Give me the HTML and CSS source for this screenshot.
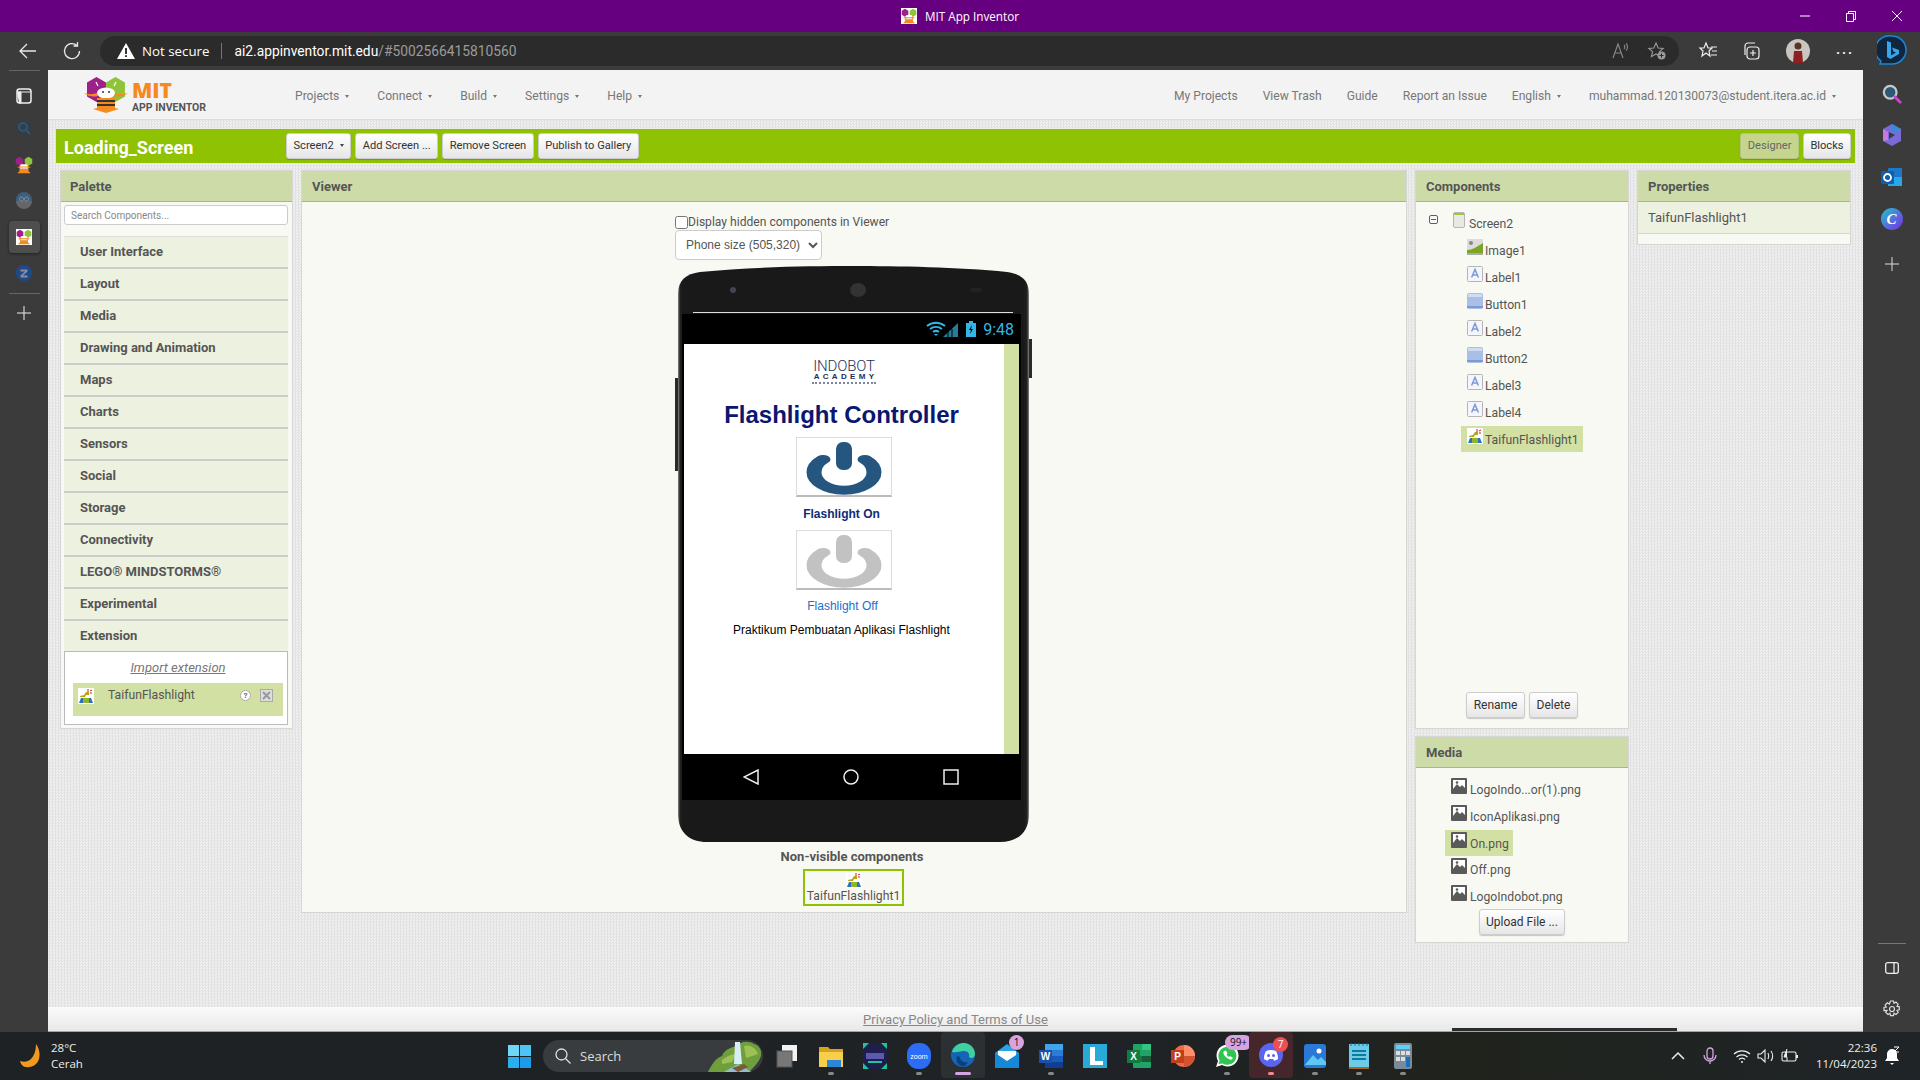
FILE: index.html
```html
<!DOCTYPE html>
<html lang="en">
<head>
<meta charset="utf-8">
<title>MIT App Inventor</title>
<link rel="stylesheet" href="styles.css">
</head>
<body>
<svg class="defs" width="0" height="0" aria-hidden="true">
  <defs>
    <symbol id="mini" viewBox="0 0 24 24">
      <path d="M6 1l5 3v6l-5 3-5-3V4z" fill="#9c2188"/><path d="M18 1l5 3v6l-5 3-5-3V4z" fill="#8fc43a"/>
      <path d="M1 14c4 2 5-1 6-2h10c1 1 2 4 6 2l-5 2v4l3 3H3l3-3v-4z" fill="#f58a1f"/><rect x="7" y="11" width="10" height="3" rx="1.5" fill="#fff"/><rect x="7" y="15" width="10" height="2" fill="#ddd"/>
    </symbol>
    <symbol id="ic-screen" viewBox="0 0 12 16"><rect x=".5" y=".5" width="11" height="15" rx="1.5" fill="#e8e8e4" stroke="#b5b5b5"/><rect x="1" y="1" width="10" height="2" fill="#a4c639"/></symbol>
    <symbol id="ic-image" viewBox="0 0 16 16"><rect width="16" height="16" rx="1" fill="#dcdcdc"/><circle cx="4" cy="4" r="2" fill="#888"/><path d="M0 11c6 0 9-3 16-7v12H0z" fill="#7da620"/><rect y="14" width="16" height="2" fill="#aaa"/></symbol>
    <symbol id="ic-label" viewBox="0 0 16 16"><rect x=".5" y=".5" width="15" height="15" rx="1" fill="#f4f6fb" stroke="#b5b5b5"/><path d="M4.6 11.5L8 3.5l3.400 8M5.800 9h4.400" fill="none" stroke="#7c9bd6" stroke-width="1.500"/></symbol>
    <symbol id="ic-button" viewBox="0 0 16 16"><rect width="16" height="16" rx="2" fill="#a9bfe6"/><rect width="16" height="2" y="13" fill="#7f9ad0"/><rect x="1" y="1" width="14" height="3" fill="#cfdcf2"/></symbol>
    <symbol id="ic-taifun" viewBox="0 0 16 16"><rect width="16" height="16" fill="#fff"/><path d="M2 8l4-1 2-3h3v3H8L7 9H2z" fill="#b9a41a"/><path d="M10 1v3M12 3l2-1M12 5h2" stroke="#c8202c" stroke-width="1"/><path d="M5 10h6v5H5z" fill="#8fb52a"/><path d="M1 15l2-5h2v5zM11 10h2l2 5h-4z" fill="#2f6fc0"/></symbol>
    <symbol id="ic-media" viewBox="0 0 16 16"><rect width="16" height="16" rx="1" fill="#5a5a5a"/><rect x="2" y="2" width="12" height="10" fill="#fff"/><path d="M2 11l4-5 3 3 2-2 3 3v2H2z" fill="#5a5a5a"/><circle cx="6" cy="4.500" r="1.300" fill="#5a5a5a"/></symbol>
    <symbol id="power" viewBox="0 0 94 58"><path transform="translate(47 34) scale(1 .6)" d="M-21-21A30 30 0 1 0 21-21" fill="none" stroke="currentColor" stroke-width="15" stroke-linecap="round"/><rect x="39" y="4" width="16" height="28" rx="7" fill="currentColor"/></symbol>
  </defs>
</svg>

<header class="titlebar">
  <svg class="title-ico" width="16" height="16"><rect width="16" height="16" fill="#fff"/><use href="#mini" width="16" height="16"/></svg>
  <span>MIT App Inventor</span>
  <div class="winctl">
    <svg width="12" height="12" viewBox="0 0 12 12"><path d="M1 6h10" stroke="#fff"/></svg>
    <svg width="12" height="12" viewBox="0 0 12 12"><path d="M1.500 3.500h7v8h-7zM3.500 3.500v-2h7v8h-2" fill="none" stroke="#fff"/></svg>
    <svg width="12" height="12" viewBox="0 0 12 12"><path d="M1 1l10 10M11 1L1 11" stroke="#fff"/></svg>
  </div>
</header>

<div class="toolbar">
  <svg class="tb-ico" width="20" height="20" viewBox="0 0 20 20"><path d="M18 10H2M9 3l-7 7 7 7" fill="none" stroke="#e8e8e8" stroke-width="1.300"/></svg>
  <svg class="tb-ico refresh" width="20" height="20" viewBox="0 0 20 20"><path d="M15 4.500A7.500 7.500 0 1 0 17.500 10M15.500 1v4h-4" fill="none" stroke="#e8e8e8" stroke-width="1.300"/></svg>
  <div class="omnibox">
    <svg width="18" height="16" viewBox="0 0 18 16"><path d="M9 0l9 16H0z" fill="#fff"/><path d="M9 5v6M9 12.200v1.800" stroke="#222" stroke-width="1.800"/></svg>
    <span class="notsecure">Not secure</span>
    <span class="sep"></span>
    <span class="url"><b>ai2.appinventor.mit.edu</b>/#5002566415810560</span>
    <div class="omni-right">
      <svg width="20" height="20" viewBox="0 0 20 20"><path d="M2 17L7 3l5 14M3.800 12h6.400M13 4c1 1 1 3 0 4M15 2.500c2 2 2 5 0 7" fill="none" stroke="#8a8a8a" stroke-width="1.100"/></svg>
      <svg width="20" height="20" viewBox="0 0 20 20"><path d="M9 2l2.200 5 5 .4-3.800 3.300 1.200 5-4.600-2.700-4.600 2.700 1.200-5L1.800 7.400l5-.4z" fill="none" stroke="#9a9a9a" stroke-width="1.100"/><circle cx="14.500" cy="14.500" r="4" fill="#9a9a9a"/><path d="M14.500 12.500v4M12.500 14.500h4" stroke="#2b2b2b"/></svg>
    </div>
  </div>
  <div class="tb-right">
    <svg width="20" height="20" viewBox="0 0 20 20"><path d="M8 2l2 5h4l-3 3 1 5-4-3-4 3 1-5-3-3h4z" fill="none" stroke="#eee" stroke-width="1.200"/><path d="M13 6h6M14 10h5M13 14h6" stroke="#eee" stroke-width="1.200"/></svg>
    <svg class="coll" width="20" height="20" viewBox="0 0 20 20"><rect x="6" y="6" width="12" height="12" rx="3" fill="none" stroke="#eee" stroke-width="1.200"/><path d="M12 9v6M9 12h6M4 14V5a3 3 0 0 1 3-3h7" fill="none" stroke="#eee" stroke-width="1.200"/></svg>
    <svg class="avatar" width="24" height="24" viewBox="0 0 24 24"><circle cx="12" cy="12" r="12" fill="#c9c6bf"/><circle cx="12" cy="7" r="3.500" fill="#5b3426"/><path d="M8 12h8l1 12H7z" fill="#8e1f22"/></svg>
    <span class="dots">&#8943;</span>
    <svg class="bing" width="30" height="32" viewBox="0 0 30 32"><path d="M15 1a14 14 0 0 1 0 28H3l1-3A14 14 0 0 1 15 1z" fill="#10263f" stroke="#1a86d8" stroke-width="1.500"/><path d="M10 6l4 1.500v13l5-3-2.500-1-1.500-4 7 2.500v4l-8.500 5L10 22z" fill="#36a6ea"/></svg>
  </div>
</div>

<div class="main">
  <aside class="leftbar">
    <span class="lb-line"></span>
    <svg class="lb-ico" width="16" height="16" viewBox="0 0 16 16"><rect x="1" y="1" width="14" height="14" rx="2.500" fill="none" stroke="#eee" stroke-width="1.500"/><path d="M1 4h14M1 4h4v11H3" fill="#eee" stroke="#eee"/></svg>
    <svg class="lb-ico" width="14" height="14" viewBox="0 0 14 14"><circle cx="6" cy="6" r="4" fill="none" stroke="#1e5a8a" stroke-width="2"/><path d="M9 9l4 4" stroke="#1e5a8a" stroke-width="2"/></svg>
    <svg class="lb-ico lb-app" width="18" height="18"><use href="#mini" width="18" height="18"/></svg>
    <svg class="lb-ico" width="18" height="18" viewBox="0 0 18 18"><circle cx="9" cy="9" r="8" fill="#3c5f7c"/><path d="M1 10h16a8 8 0 0 1-16 0z" fill="#666"/><circle cx="6.500" cy="8" r="2" fill="none" stroke="#889"/><circle cx="11.500" cy="8" r="2" fill="none" stroke="#889"/></svg>
    <div class="lb-active"><svg width="16" height="16"><rect width="16" height="16" fill="#fff"/><use href="#mini" width="16" height="16"/></svg></div>
    <svg class="lb-ico lb-z" width="16" height="16" viewBox="0 0 16 16"><circle cx="8" cy="8" r="8" fill="#1f4a8a"/><path d="M4.500 4.500h7v2L7 10.500h4.500v2h-7v-2L9 6.500H4.500z" fill="#8c8c9c"/></svg>
    <span class="lb-line"></span>
    <svg class="lb-ico lb-plus" width="14" height="14" viewBox="0 0 14 14"><path d="M7 0v14M0 7h14" stroke="#eee"/></svg>
  </aside>

  <main class="page">
    <nav class="nav">
      <div class="logo">
        <svg width="46" height="36" viewBox="0 0 46 36">
          <path d="M12.500 0l9.500 5.500v14L12.500 25 3 19.500v-14z" fill="#9c2188"/>
          <path d="M31.500 0L41 5.500v14L31.500 25 22 19.500v-14z" fill="#8fc43a"/>
          <path d="M0 16c6 2 10 1 13 0l1 3c-4 1-9 1-14-3zM44 16c-6 2-10 1-13 0l-1 3c4 1 9 1 14-3z" fill="#f58a1f"/>
          <path d="M14 9l-2-4M30 9l2-4" stroke="#fff" stroke-width="1.200"/>
          <ellipse cx="22" cy="16" rx="9" ry="5.500" fill="#fff"/>
          <circle cx="19" cy="15" r="1" fill="#333"/><circle cx="25" cy="15" r="1" fill="#333"/>
          <path d="M13 21h18v10H13z" fill="#f58a1f"/><rect x="13" y="23" width="18" height="2" fill="#333"/><rect x="13" y="27" width="18" height="2" fill="#333"/>
          <path d="M13 31h18l4 1-13 4-13-4z" fill="#f58a1f"/>
        </svg>
        <div class="logo-text"><span class="mit">MIT</span><span class="ai">APP INVENTOR</span></div>
      </div>
      <ul class="menu menu-left">
        <li>Projects<i class="caret"></i></li>
        <li>Connect<i class="caret"></i></li>
        <li>Build<i class="caret"></i></li>
        <li>Settings<i class="caret"></i></li>
        <li>Help<i class="caret"></i></li>
      </ul>
      <ul class="menu menu-right">
        <li>My Projects</li>
        <li>View Trash</li>
        <li>Guide</li>
        <li>Report an Issue</li>
        <li class="lang">English<i class="caret"></i></li>
        <li>muhammad.120130073@student.itera.ac.id<i class="caret"></i></li>
      </ul>
    </nav>

    <div class="projectbar">
      <h1 class="projname">Loading_Screen</h1>
      <button class="btn">Screen2<i class="caret dark"></i></button>
      <button class="btn">Add Screen ...</button>
      <button class="btn">Remove Screen</button>
      <button class="btn">Publish to Gallery</button>
      <div class="modes">
        <button class="btn on">Designer</button>
        <button class="btn">Blocks</button>
      </div>
    </div>

    <div class="workspace">
      <section class="panel palette">
        <h2 class="panel-h">Palette</h2>
        <div class="searchwrap"><input class="search" placeholder="Search Components..."></div>
        <ul class="drawers">
          <li>User Interface</li><li>Layout</li><li>Media</li><li>Drawing and Animation</li><li>Maps</li><li>Charts</li><li>Sensors</li><li>Social</li><li>Storage</li><li>Connectivity</li><li>LEGO® MINDSTORMS®</li><li>Experimental</li><li>Extension</li>
        </ul>
        <div class="extbox">
          <a class="import">Import extension</a>
          <div class="extrow">
            <svg width="16" height="16"><use href="#ic-taifun" width="16" height="16"/></svg>
            <span class="extname">TaifunFlashlight</span>
            <span class="help">?</span>
            <svg class="ext-x" width="13" height="13" viewBox="0 0 13 13"><rect x=".5" y=".5" width="12" height="12" fill="#ddd" stroke="#aaa"/><path d="M3 3l7 7M10 3l-7 7" stroke="#999" stroke-width="2"/></svg>
          </div>
        </div>
      </section>

      <section class="panel viewer">
        <h2 class="panel-h">Viewer</h2>
        <div class="viewer-body">
          <label class="hidden-check"><input type="checkbox">Display hidden components in Viewer</label>
          <select class="size"><option>Phone size (505,320)</option></select>
          <div class="phone-wrap">
            <span class="side side-r"></span>
            <span class="side side-l"></span>
            <div class="phone">
              <div class="speaker"><i class="cam"></i><i class="mic"></i><i class="sens"></i></div>
              <div class="topline"></div>
              <div class="status">
                <svg width="36" height="16" viewBox="0 0 36 16"><path d="M1 5a14 14 0 0 1 18 0M4 8a10 10 0 0 1 12 0M7 11a5 5 0 0 1 6 0" fill="none" stroke="#33b5e5" stroke-width="2"/><path d="M10 15l2-2-4 0z" fill="#33b5e5"/><path d="M17 16l15-14v14z" fill="#2a7a99"/><path d="M22 16v-5M26 16V8" stroke="#000"/></svg>
                <svg width="10" height="16" viewBox="0 0 10 16"><path d="M3 0h4v2h3v14H0V2h3z" fill="#33b5e5"/><path d="M6 4L3 9h2l-1 4 3-5H5z" fill="#000"/></svg>
                <span class="clock">9:48</span>
              </div>
              <div class="screen">
                <div class="app">
                  <div class="indobot">
                    <span class="ib1">INDOBOT</span>
                    <span class="ib2">ACADEMY</span>
                    <span class="ib3"></span>
                  </div>
                  <div class="appt">Flashlight Controller</div>
                  <div class="pwr blue"><svg width="94" height="58"><use href="#power" width="94" height="58"/></svg></div>
                  <div class="lab lab-on">Flashlight On</div>
                  <div class="pwr grey"><svg width="94" height="58"><use href="#power" width="94" height="58"/></svg></div>
                  <div class="lab lab-off">Flashlight Off</div>
                  <div class="lab lab-p">Praktikum Pembuatan Aplikasi Flashlight</div>
                </div>
                <div class="scroll"></div>
              </div>
              <div class="softkeys">
                <svg width="16" height="16" viewBox="0 0 16 16"><path d="M15 1v14L1 8z" fill="none" stroke="#eee" stroke-width="1.500"/></svg>
                <svg width="16" height="16" viewBox="0 0 16 16"><circle cx="8" cy="8" r="7" fill="none" stroke="#eee" stroke-width="1.500"/></svg>
                <svg width="16" height="16" viewBox="0 0 16 16"><rect x="1" y="1" width="14" height="14" fill="none" stroke="#eee" stroke-width="1.500"/></svg>
              </div>
            </div>
          </div>
          <div class="nv-title">Non-visible components</div>
          <div class="nv-box">
            <svg width="16" height="16"><use href="#ic-taifun" width="16" height="16"/></svg>
            <span>TaifunFlashlight1</span>
          </div>
        </div>
      </section>

      <div class="col-comp">
        <section class="panel comps">
          <h2 class="panel-h">Components</h2>
          <ul class="tree">
            <li class="t-root"><span class="expand"></span><svg width="12" height="16"><use href="#ic-screen" width="12" height="16"/></svg><span>Screen2</span></li>
            <li><svg width="16" height="16"><use href="#ic-image" width="16" height="16"/></svg><span>Image1</span></li>
            <li><svg width="16" height="16"><use href="#ic-label" width="16" height="16"/></svg><span>Label1</span></li>
            <li><svg width="16" height="16"><use href="#ic-button" width="16" height="16"/></svg><span>Button1</span></li>
            <li><svg width="16" height="16"><use href="#ic-label" width="16" height="16"/></svg><span>Label2</span></li>
            <li><svg width="16" height="16"><use href="#ic-button" width="16" height="16"/></svg><span>Button2</span></li>
            <li><svg width="16" height="16"><use href="#ic-label" width="16" height="16"/></svg><span>Label3</span></li>
            <li><svg width="16" height="16"><use href="#ic-label" width="16" height="16"/></svg><span>Label4</span></li>
            <li class="sel"><svg width="16" height="16"><use href="#ic-taifun" width="16" height="16"/></svg><span>TaifunFlashlight1</span></li>
          </ul>
          <div class="comp-actions"><button class="btn">Rename</button><button class="btn">Delete</button></div>
        </section>
        <section class="panel media">
          <h2 class="panel-h">Media</h2>
          <ul class="mlist">
            <li><svg width="16" height="16"><use href="#ic-media" width="16" height="16"/></svg><span>LogoIndo...or(1).png</span></li>
            <li><svg width="16" height="16"><use href="#ic-media" width="16" height="16"/></svg><span>IconAplikasi.png</span></li>
            <li class="sel"><svg width="16" height="16"><use href="#ic-media" width="16" height="16"/></svg><span>On.png</span></li>
            <li><svg width="16" height="16"><use href="#ic-media" width="16" height="16"/></svg><span>Off.png</span></li>
            <li><svg width="16" height="16"><use href="#ic-media" width="16" height="16"/></svg><span>LogoIndobot.png</span></li>
          </ul>
          <div class="upload"><button class="btn">Upload File ...</button></div>
        </section>
      </div>

      <section class="panel props">
        <h2 class="panel-h">Properties</h2>
        <div class="prop-row">TaifunFlashlight1</div>
      </section>
    </div>

    <footer class="foot"><a>Privacy Policy and Terms of Use</a><span class="thumbstrip"></span></footer>
  </main>

  <aside class="rightbar">
    <svg width="20" height="20" viewBox="0 0 22 22"><circle cx="9" cy="9" r="7" fill="#2a5a78" stroke="#c9c9c9" stroke-width="2.500"/><path d="M14 14l6 6" stroke="#d63fd6" stroke-width="3" stroke-linecap="round"/></svg>
    <svg width="20" height="22" viewBox="0 0 20 22"><path d="M10 0l9 5v12l-9 5-9-5V5z" fill="#7a6bd8"/><path d="M10 0l9 5-5 4-4-2z" fill="#3a8ad8"/><path d="M1 5l5 3v8l-5 1z" fill="#c87ad8"/><path d="M7 8l6 3-6 4z" fill="#3b3b3b"/></svg>
    <svg width="22" height="22" viewBox="0 0 22 22"><rect x="7" y="2" width="14" height="18" rx="1" fill="#1e78c8"/><rect x="7" y="11" width="14" height="9" fill="#28a8ea"/><rect y="5" width="13" height="13" rx="1" fill="#0f5fb0"/><circle cx="6.500" cy="11.500" r="3.500" fill="none" stroke="#fff" stroke-width="1.800"/></svg>
    <div class="canva">C</div>
    <svg class="rb-plus" width="14" height="14" viewBox="0 0 14 14"><path d="M7 0v14M0 7h14" stroke="#ddd"/></svg>
    <span class="rb-spacer"></span>
    <span class="rb-line"></span>
    <svg class="rb-toggle" width="14" height="12" viewBox="0 0 14 12"><rect x=".7" y=".7" width="12.600" height="10.600" rx="2" fill="none" stroke="#eee" stroke-width="1.300"/><path d="M9 1v10" stroke="#eee" stroke-width="1.300"/></svg>
    <svg width="18" height="18" viewBox="0 0 18 18"><circle cx="9" cy="9" r="2.500" fill="none" stroke="#ddd" stroke-width="1.200"/><path d="M7.500 1h3l.5 2.300 2-1.200 2.200 2.200-1.200 2 2.300.5v3l-2.300.5 1.200 2-2.200 2.200-2-1.200-.5 2.300h-3l-.5-2.300-2 1.200-2.200-2.200 1.200-2L1 10.500v-3l2.300-.5-1.200-2 2.200-2.200 2 1.200z" fill="none" stroke="#ddd" stroke-width="1.200"/></svg>
  </aside>
</div>

<footer class="taskbar">
  <div class="tb-weather">
    <svg width="22" height="24" viewBox="0 0 22 24"><path d="M16 0c6 8 5 22-7 23C4 24 1 21 0 17c7 3 16-2 16-17z" fill="#f29a1d"/></svg>
    <div class="wtext"><span>28°C</span><span>Cerah</span></div>
  </div>
  <svg class="start" width="23" height="23" viewBox="0 0 23 23"><path d="M0 0h11v11H0z" fill="#6fd6f7"/><path d="M12 0h11v11H12z" fill="#4dc4f4"/><path d="M0 12h11v11H0z" fill="#29aef0"/><path d="M12 12h11v11H12z" fill="#1c9be8"/></svg>
  <div class="tsearch">
    <svg width="16" height="16" viewBox="0 0 16 16"><circle cx="6.500" cy="6.500" r="5.500" fill="none" stroke="#ddd" stroke-width="1.300"/><path d="M10.500 10.500l5 5" stroke="#ddd" stroke-width="1.300"/></svg>
    <span>Search</span>
    <svg class="falls" width="54" height="32" viewBox="0 0 54 32"><path d="M0 32C4 24 8 18 14 16c2-6 8-8 14-10 4-4 12-6 18-2 5 1 8 6 7 12-2 6-6 10-12 16z" fill="#6f9f3c"/><path d="M14 20c5-4 10-6 14-6l-4 8-10 2zM36 6c6-2 12 2 14 8l-12 4z" fill="#9cc257"/><path d="M27 2h5l2 22h-8z" fill="#d8eef5"/><path d="M16 32l14-8 14 8z" fill="#8fc0d0"/><path d="M24 28l12-4 4 3-10 5z" fill="#7b5a3a"/></svg>
  </div>
  <ul class="apps">
    <li><svg width="24" height="24" viewBox="0 0 24 24"><rect x="7" y="1" width="15" height="16" fill="#f2f2f2"/><rect x="2" y="7" width="15" height="16" fill="#777" stroke="#555"/></svg></li>
    <li class="run"><svg width="24" height="24" viewBox="0 0 24 24"><path d="M0 3h9l2 2h13v3H0z" fill="#d9a21b"/><path d="M0 8h24v15H0z" fill="#f7cf4a"/><rect x="8" y="16" width="14" height="7" fill="#2c86d8"/></svg></li>
    <li><svg width="24" height="26" viewBox="0 0 24 26"><rect width="24" height="26" fill="#1e1f4a"/><path d="M0 0h6L0 6zM24 26h-6l6-6zM0 26h6L0 20zM24 0h-6l6 6z" fill="#21c49a"/><rect x="3" y="10" width="18" height="6" fill="#5a5ab0"/><rect x="5" y="18" width="14" height="2" fill="#21c49a"/></svg></li>
    <li class="run"><svg width="24" height="26" viewBox="0 0 24 26"><rect width="24" height="26" rx="11" fill="#2d6cf6"/><text x="12" y="15.500" class="zoomt">zoom</text></svg></li>
    <li class="active"><svg width="24" height="24" viewBox="0 0 24 24"><circle cx="12" cy="12" r="12" fill="#1565b5"/><path d="M1 9C3 2 9 0 13 0c6 0 11 5 11 11 0 4-4 5-6 3 1-3-1-6-5-6-4 0-8 2-12 1z" fill="#3fd0a0"/><path d="M9 14c0 4 4 6 8 5l-3 4C8 24 4 19 6 13z" fill="#0f3f7a"/></svg></li>
    <li class="badge-host"><svg width="24" height="24" viewBox="0 0 24 24"><path d="M0 9l12-9 12 9v15H0z" fill="#2aa3e8"/><path d="M3 7h18v6l-9 5-9-5z" fill="#fff"/><path d="M0 9l12 8 12-8v15H0z" fill="#1589d8"/></svg><b class="badge lilac b1">1</b></li>
    <li class="run"><svg width="24" height="24" viewBox="0 0 24 24"><rect x="6" width="18" height="6" fill="#41a5ee"/><rect x="6" y="6" width="18" height="6" fill="#2b7cd3"/><rect x="6" y="12" width="18" height="6" fill="#185abd"/><rect x="6" y="18" width="18" height="6" fill="#103f91"/><rect y="6" width="13" height="13" fill="#1c4fa8"/><text x="6.500" y="16" class="ot">W</text></svg></li>
    <li><svg width="24" height="24" viewBox="0 0 24 24"><rect width="24" height="24" fill="#29a9d8"/><path d="M7 3h5v14h8v4H7z" fill="#fff"/></svg></li>
    <li><svg width="24" height="24" viewBox="0 0 24 24"><rect x="6" width="18" height="24" rx="1" fill="#21a366"/><rect x="15" width="9" height="6" fill="#33c481"/><rect x="6" y="12" width="9" height="6" fill="#107c41"/><rect x="15" y="12" width="9" height="6" fill="#185c37"/><rect y="6" width="13" height="13" fill="#107c41"/><text x="6.500" y="16" class="ot">X</text></svg></li>
    <li><svg width="24" height="24" viewBox="0 0 24 24"><circle cx="13" cy="12" r="11" fill="#ed6c47"/><path d="M13 1a11 11 0 0 1 11 11H13z" fill="#ff8f6b"/><path d="M13 12h11a11 11 0 0 1-11 11z" fill="#d35230"/><rect y="6" width="13" height="13" fill="#c43e1c"/><text x="6.500" y="16" class="ot">P</text></svg></li>
    <li class="run badge-host"><svg width="24" height="24" viewBox="0 0 24 24"><path d="M1 23l2-6a11 11 0 1 1 4 4z" fill="#fff"/><path d="M3.500 20l1.200-3.500a9 9 0 1 1 3 3z" fill="#2fc551"/><path d="M9 7c-2 2 1 7 7 9l2-2-3-2-1 1c-1-.5-2-1.500-2.500-2.500l1-1-1.500-3z" fill="#fff"/></svg><b class="badge lilac b99">99+</b></li>
    <li class="run alert badge-host"><svg width="24" height="24" viewBox="0 0 24 24"><circle cx="12" cy="12" r="12" fill="#5865f2"/><path d="M7 8c3-1.500 7-1.500 10 0 1.500 2.500 2 5 2 8-1.500 1-3 1.500-4 1.500l-1-1.500h-4l-1 1.500c-1 0-2.500-.5-4-1.500 0-3 .5-5.500 2-8z" fill="#fff"/><circle cx="9.500" cy="12.500" r="1.500" fill="#5865f2"/><circle cx="14.500" cy="12.500" r="1.500" fill="#5865f2"/></svg><b class="badge red b7">7</b></li>
    <li class="run"><svg width="24" height="24" viewBox="0 0 24 24"><rect width="22" height="24" x="1" rx="3" fill="#2a78d8"/><path d="M1 22l9-11 5 5 3-3 5 5v3H1z" fill="#5fc8f0"/><circle cx="16" cy="7" r="2.500" fill="#fff"/></svg></li>
    <li class="run"><svg width="24" height="26" viewBox="0 0 24 26"><rect x="2" y="1" width="20" height="23" fill="#6ccbe8"/><rect x="2" y="24" width="20" height="2" fill="#a6662a"/><path d="M5 8h14M5 12h14M5 16h14" stroke="#0f7a9f" stroke-width="2"/><path d="M4 0v3M8 0v3M12 0v3M16 0v3M20 0v3" stroke="#1a6e8a"/></svg></li>
    <li class="run"><svg width="24" height="26" viewBox="0 0 24 26"><rect x="3" width="18" height="26" rx="2" fill="#7b8a99"/><rect x="5" y="2" width="14" height="4" fill="#5cd0f5"/><rect x="5" y="8" width="4" height="4" fill="#ddd"/><rect x="10" y="8" width="4" height="4" fill="#ddd"/><rect x="15" y="8" width="4" height="4" fill="#ddd"/><rect x="5" y="14" width="4" height="4" fill="#ddd"/><rect x="10" y="14" width="4" height="4" fill="#ddd"/><rect x="15" y="14" width="4" height="10" fill="#1c6fc0"/></svg></li>
  </ul>
  <div class="tray">
    <svg width="18" height="18" viewBox="0 0 18 18"><path d="M3 12l6-6 6 6" fill="none" stroke="#eee" stroke-width="1.500"/></svg>
    <svg class="g14" width="18" height="18" viewBox="0 0 18 18"><rect x="6" y="1" width="6" height="11" rx="3" fill="none" stroke="#d4a4e4" stroke-width="1.300"/><path d="M3 8a6 6 0 0 0 12 0M9 14v3" fill="none" stroke="#d4a4e4" stroke-width="1.300"/></svg>
    <svg class="g14" width="18" height="18" viewBox="0 0 18 18"><path d="M1 7a12 12 0 0 1 16 0M3.500 10a8 8 0 0 1 11 0M6 12.500a4 4 0 0 1 6 0" fill="none" stroke="#eee" stroke-width="1.200"/><circle cx="9" cy="15" r="1" fill="#eee"/></svg>
    <svg class="g6" width="18" height="18" viewBox="0 0 18 18"><path d="M1 7h3l4-4v12l-4-4H1zM11 6c1 2 1 4 0 6M14 4c2 3 2 7 0 10" fill="none" stroke="#eee" stroke-width="1.100"/></svg>
    <svg class="g6" width="18" height="18" viewBox="0 0 18 18"><rect x="1" y="5" width="14" height="9" rx="1.500" fill="none" stroke="#eee" stroke-width="1.100"/><rect x="15" y="8" width="2" height="3" fill="#eee"/><path d="M6 2L3 10h3v4" fill="#eee" stroke="#eee"/></svg>
    <div class="clockbox"><span>22:36</span><span>11/04/2023</span></div>
    <svg class="g6" width="18" height="20" viewBox="0 0 18 20"><path d="M9 3a5 5 0 0 0-5 5v4l-2 3h14l-2-3V8a5 5 0 0 0-5-5z" fill="#fff"/><path d="M7 17h4l-2 2z" fill="#fff"/><path d="M11 1h5l-5 5h5" fill="none" stroke="#fff"/></svg>
  </div>
</footer>
</body>
</html>
```
FILE: styles.css
```css
* { box-sizing: border-box; }
html, body { margin: 0; padding: 0; }
body {
  width: 1920px; height: 1080px; overflow: hidden;
  display: flex; flex-direction: column;
  font-family: Roboto, "Liberation Sans", sans-serif;
  color: #555;
  background: #3b3b3b;
}
ul { list-style: none; margin: 0; padding: 0; }
h1, h2 { margin: 0; }
.defs { position: absolute; }

/* window chrome */
.titlebar {
  height: 32px; flex: none; background: #670080; color: #fff;
  display: flex; align-items: center; justify-content: center; gap: 8px;
  font: 11.700px "Open Sans", sans-serif; position: relative;
}
.winctl { position: absolute; right: 17px; top: 10px; display: flex; gap: 34px; }
.toolbar {
  height: 38px; flex: none; background: #3b3b3b; display: flex; align-items: center;
  padding-left: 18px;
}
.refresh { margin-left: 24px; }
.omnibox {
  margin-left: 18px; width: 1579px; height: 30px; border-radius: 15px; background: #2b2b2b;
  display: flex; align-items: center; padding-left: 17px; color: #fff; font: 14px "Open Sans", sans-serif;
}
.notsecure { margin-left: 7px; font-size: 13.300px; color: #fff; }
.sep { width: 1px; height: 16px; background: #777; margin: 0 12px; }
.url { color: #9b9b9b; font-family: Roboto, sans-serif; font-size: 13.800px; }
.url b { font-weight: 400; color: #fff; }
.omni-right { margin-left: auto; display: flex; gap: 16px; padding-right: 12px; }
.tb-right { flex: 1; display: flex; align-items: center; padding-left: 19px; }
.coll { margin-left: 23px; }
.avatar { margin-left: 25px; }
.dots { color: #eee; font-size: 18px; margin-left: 25px; width: 16px; }
.bing { margin-left: 26px; }

.main { flex: 1; display: flex; min-height: 0; }
.leftbar { width: 48px; flex: none; background: #3b3b3b; display: flex; flex-direction: column; align-items: center; }
.lb-line { width: 31px; height: 1px; background: #666; flex: none; }
.lb-ico { flex: none; margin-top: 17px; }
.lb-app { margin-top: 21px; }
.lb-active { width: 31px; height: 32px; margin-top: 12px; border-radius: 4px; background: #4e4e4e; box-shadow: 0 1px 3px #222; display: flex; align-items: center; justify-content: center; flex: none; }
.lb-z { margin-top: 12px; margin-bottom: 12px; }
.lb-plus { margin-top: 12px; }

.rightbar { width: 57px; flex: none; background: #3b3b3b; display: flex; flex-direction: column; align-items: center; padding: 14px 0 14px; gap: 20px; }
.canva { width: 22px; height: 22px; border-radius: 50%; background: linear-gradient(135deg, #20c4cb, #7d2ae8); color: #fff; font: italic 700 15px/22px "Liberation Serif", serif; text-align: center; }
.rb-plus { margin-top: 7px; }
.rb-spacer { flex: 1; }
.rb-line { width: 28px; height: 1px; flex: none; background: #777; margin-bottom: -2px; }
.rb-toggle { margin-bottom: 6px; }

/* page */
.page {
  flex: 1; min-width: 0; display: flex; flex-direction: column;
  background: repeating-conic-gradient(#e2e2e2 0 25%, #f0f0f0 0 50%) 0 0 / 3px 3px;
}
.nav { height: 50px; flex: none; background: #f3f3f3; border-bottom: 1px solid #dcdcdc; display: flex; align-items: center; padding: 3px 0 0 36px; font-size: 12.100px; color: #777; }
.logo { display: flex; width: 122px; height: 36px; gap: 2px; flex: none; margin-top: -3px; }
.logo-text { display: flex; flex-direction: column; padding-top: 5px; }
.mit { font: 800 21px/17px "Open Sans", sans-serif; color: #f58a1f; }
.ai { font: 700 10.500px/13px Roboto, sans-serif; color: #555; margin-top: 2px; white-space: nowrap; }
.menu { display: flex; align-items: center; }
.menu-left { margin-left: 89px; gap: 28px; }
.menu-right { margin-left: auto; gap: 25px; padding-right: 27px; }
.lang { margin-right: 3px; }
.caret { display: inline-block; width: 0; height: 0; margin-left: 6px; vertical-align: 2px; border: 2.500px solid transparent; border-top: 3px solid #777; border-bottom: 0; }
.caret.dark { border-top-color: #444; }

.projectbar { height: 34px; flex: none; margin: 9px 8px 0; background: #8fc202; display: flex; align-items: center; padding-left: 8px; gap: 4px; }
.projname { font: 700 18px/22px Roboto, sans-serif; color: #fff; width: 218px; padding-top: 3px; }
.btn {
  height: 26px; padding: 0 6.500px 1px; border: 1px solid #ccc; border-radius: 3px;
  background: linear-gradient(#fff, #e6e6e6); box-shadow: 0 1px 1px rgba(0,0,0,.2);
  font: 11.100px Roboto, sans-serif; color: #333; white-space: nowrap;
}
.btn.on { background: #c5d58d; color: #666; border-color: #b5c67e; }
.modes { margin-left: auto; display: flex; gap: 4px; padding-right: 4px; }

.workspace { flex: 1; min-height: 0; display: flex; align-items: flex-start; gap: 10px; margin-top: 8px; padding-left: 13px; }
.panel { background: #f8f9f3; box-shadow: 0 0 0 1px #d6d6d6; display: flex; flex-direction: column; }
.panel-h { height: 31px; flex: none; background: #ccdba8; border-bottom: 1px solid #a9b58e; font: 700 13px/32px Roboto, sans-serif; color: #555; padding-left: 10px; }

.palette { width: 231px; height: 557px; }
.palette .panel-h { padding-left: 9px; }
.searchwrap { padding: 3px 4px 0 3px; height: 34px; }
.search { display: block; width: 100%; height: 20px; border: 1px solid #ccc; border-radius: 3px; padding: 0 6px; font: 10px Roboto, sans-serif; background: #fff; }
.search::placeholder { color: #888; }
.drawers { margin: 0 4px 0 3px; border-top: 1px solid #ddd; }
.drawers li { height: 32px; background: #edf1e0; border-bottom: 2px solid #ccc; padding-left: 16px; font: 700 13px/30px Roboto, sans-serif; color: #555; }
.drawers li:last-child { border-bottom: 0; height: 30px; }
.extbox { margin: 0 4px 0 3px; height: 74px; background: #fff; border: 1px solid #bbb; padding: 7px 4px 0 8px; }
.import { display: block; text-align: center; font: italic 13px/18px Roboto, sans-serif; color: #777; text-decoration: underline; }
.extrow { margin-top: 6px; height: 33px; background: #d3e0a3; display: flex; align-items: flex-start; padding: 5px 10px 0 5px; }
.extname { font: 12.200px/14px Roboto, sans-serif; color: #555; margin-left: 14px; }
.help { margin-left: auto; width: 11px; height: 11px; border-radius: 50%; background: #fff; border: 1px solid #aaa; font: 700 8px/9px Roboto, sans-serif; text-align: center; color: #666; margin-top: 2px; }
.ext-x { margin-left: 9px; margin-top: 1px; }

.viewer { width: 1104px; height: 741px; }
.viewer-body { width: 354px; margin: 12px 0 0 373px; display: flex; flex-direction: column; align-items: stretch; }
.hidden-check { display: flex; align-items: center; height: 16px; font: 12.100px Roboto, sans-serif; color: #555; }
.hidden-check input { margin: 0; width: 13px; height: 13px; }
.size { width: 147px; height: 30px; border: 1px solid #ccc; border-radius: 4px; background: #fff; font: 12px "Liberation Sans", sans-serif; color: #555; padding-left: 6px; }
.phone-wrap { position: relative; margin: 6px 0 0 3px; width: 351px; height: 576px; }
.side { position: absolute; background: #2a2a2a; }
.side-r { left: 351px; top: 73px; width: 3px; height: 39px; }
.side-l { left: -3px; top: 112px; width: 3px; height: 93px; }
.phone {
  width: 351px; height: 576px; display: flex; flex-direction: column; align-items: flex-start;
  clip-path: path("M0 28C0 14 8 8 22 6C70 1 130 0 175 0C220 0 280 1 329 6C343 8 351 14 351 28V548C351 566 340 576 322 576H29C11 576 0 566 0 548Z");
  background: linear-gradient(90deg, #888 0, #222 2px, #191919 5px, #191919 346px, #222 349px, #888 351px);
}
.speaker { height: 46px; width: 100%; flex: none; display: flex; align-items: center; padding: 0 0 0 52px; }
.cam { width: 6px; height: 6px; border-radius: 50%; background: #445; margin-top: 2px; }
.mic { width: 16px; height: 14px; border-radius: 50%; background: #333; margin: 2px 0 0 114px; }
.sens { width: 12px; height: 4px; border-radius: 2px; background: #222; margin: 2px 0 0 104px; }
.topline { width: 320px; height: 1px; background: #ddd; flex: none; margin-left: 15px; }
.status { width: 339px; height: 30px; margin: 1px 0 0 4px; background: #000; flex: none; display: flex; align-items: center; justify-content: flex-end; gap: 4px; padding-right: 7px; }
.clock { font: 16px Roboto, sans-serif; color: #33b5e5; margin-left: 3px; }
.screen { width: 339px; height: 410px; margin-left: 4px; flex: none; background: #fff; border: solid #000; border-width: 0 2px; display: flex; }
.app { width: 320px; display: flex; flex-direction: column; align-items: center; color: #000; font-family: "Liberation Sans", sans-serif; }
.scroll { flex: 1; background: #d3e0a3; }
.indobot { width: 66px; margin-top: 15px; height: 27px; display: flex; flex-direction: column; align-items: center; color: #1c2f5c; }
.ib1 { font: 300 15px/14px Roboto, sans-serif; letter-spacing: -.2px; }
.ib2 { font: 700 8px/8px "Liberation Sans", sans-serif; letter-spacing: 3.300px; margin-right: -3px; }
.ib3 { width: 64px; height: 2px; margin-top: 1px; border-top: 2px dotted #7a86a0; }
.appt { font: 700 24px/28px "Liberation Sans", sans-serif; color: #0a1670; margin: 15px 5px 0 0; }
.pwr { width: 96px; height: 60px; background: #fff; border: 1px solid #ddd; border-bottom: 2px solid #bbb; margin-top: 8px; flex: none; }
.pwr svg { display: block; }
.pwr.blue { color: #25567f; }
.pwr.grey { color: #c2c2c2; margin-top: 9px; }
.lab { font-size: 12px; line-height: 14px; margin-right: 5px; }
.lab-on { font-weight: 700; color: #0f2a78; margin-top: 10px; }
.lab-off { color: #1b6fd0; margin: 9px 3px 0 0; }
.lab-p { margin-top: 10px; }
.softkeys { width: 339px; height: 46px; margin-left: 4px; background: #000; flex: none; display: flex; align-items: center; justify-content: space-between; padding: 0 62px 0 61px; }
.nv-title { text-align: center; font: 700 13px/16px Roboto, sans-serif; color: #555; margin-top: 7px; }
.nv-box { width: 101px; height: 37px; margin: 4px 0 0 128px; border: 2px solid #8fc202; display: flex; flex-direction: column; align-items: center; font: 12.200px/17px Roboto, sans-serif; color: #555; white-space: nowrap; padding-top: 1px; }
.nv-box svg { flex: none; }

.col-comp { width: 212px; display: flex; flex-direction: column; gap: 9px; flex: none; }
.comps { height: 557px; }
.tree { padding-top: 8px; font: 12.200px/17px Roboto, sans-serif; color: #555; }
.tree li { height: 27px; display: flex; align-items: flex-start; padding-left: 51px; padding-top: 2px; }
.tree li span:last-child { margin-top: 4px; margin-left: 2px; padding-right: 2px; }
.tree svg { flex: none; }
.tree .t-root { padding-left: 13px; height: 27px; }
.tree .t-root span:last-child { margin-left: 4px; }
.expand { width: 9px; height: 9px; border: 1px solid #4a5ab0; border-radius: 2px; margin: 3px 15px 0 0; position: relative; flex: none; }
.expand::after { content: ""; position: absolute; left: 1px; right: 1px; top: 3px; height: 1px; background: #4a5ab0; }
.tree .sel { width: 122px; margin-left: 45px; padding-left: 6px; background: #d3e0a3; height: 26px; }
.comp-actions { margin-top: auto; padding-bottom: 10px; display: flex; justify-content: center; gap: 4px; }
.comp-actions .btn { font-size: 12px; }
.media { height: 205px; }
.mlist { padding-top: 8px; font: 12.200px/17px Roboto, sans-serif; color: #555; }
.mlist li { height: 27px; display: flex; align-items: flex-start; padding: 2px 0 0 35px; }
.mlist li span { margin: 4px 0 0 3px; padding-right: 4px; }
.mlist svg { flex: none; }
.mlist .sel { width: 68px; margin-left: 29px; padding-left: 6px; background: #d3e0a3; height: 26px; }
.upload { display: flex; justify-content: center; margin-top: -1px; }
.upload .btn { font-size: 12px; }

.props { width: 212px; height: 73px; flex: none; }
.prop-row { height: 32px; background: #edf1e0; border-bottom: 1px solid #d5d5d5; font: 13px/32px Roboto, sans-serif; color: #555; padding-left: 10px; }

.foot { height: 25px; flex: none; position: relative; background: linear-gradient(#fbfbfb, #e8e8e8); text-align: center; font: 13px/25px Roboto, sans-serif; color: #888; border-bottom: 1px solid #9aa4c0; }
.foot a { text-decoration: underline; }
.thumbstrip { position: absolute; left: 1404px; bottom: 0; width: 225px; height: 3px; background: #2c2c30; }

/* taskbar */
.taskbar { height: 48px; flex: none; display: flex; align-items: center; background: linear-gradient(90deg, #1e2224, #1f2226 60%, #20231c 76%, #1f2428); color: #eee; position: relative; }
.tb-weather { width: 508px; flex: none; display: flex; align-items: center; padding-left: 20px; gap: 9px; }
.wtext { display: flex; flex-direction: column; font: 11.500px/16px "Open Sans", sans-serif; }
.start { flex: none; }
.tsearch { width: 220px; height: 32px; margin: 0 2px 0 12px; border-radius: 16px; background: #383c3f; display: flex; align-items: center; padding-left: 12px; gap: 9px; font: 13px "Open Sans", sans-serif; color: #ddd; position: relative; overflow: hidden; }
.falls { position: absolute; right: 1px; top: 0; }
.apps { display: flex; flex: none; height: 48px; }
.apps li { width: 44px; height: 48px; display: flex; align-items: center; justify-content: center; position: relative; }
.apps li.run::after, .apps li.active::after { content: ""; position: absolute; bottom: 5px; left: 19px; width: 6px; height: 3px; border-radius: 2px; background: #888; }
.apps li.active { background: #2d3032; border-radius: 4px; height: 46px; }
.apps li.active::after { width: 16px; left: 14px; background: #d4a4e4; bottom: 3px; }
.apps li.alert { background: #45262a; border-radius: 4px; height: 46px; }
.apps li.alert::after { background: #f08a90; bottom: 3px; }
.zoomt { font: 400 7px Roboto, sans-serif; fill: #fff; text-anchor: middle; }
.ot { font: 700 10px "Liberation Sans", sans-serif; fill: #fff; text-anchor: middle; }
.badge { position: absolute; border-radius: 9px; font: 400 10px/15px "Open Sans", sans-serif; text-align: center; color: #111; height: 15px; min-width: 15px; }
.lilac { background: #d8a4e0; }
.red { background: #ec4f54; color: #fff; }
.b1 { right: 5px; top: 3px; }
.b99 { left: 20px; top: 3px; width: 27px; }
.b7 { right: 5px; top: 5px; }
.tray { margin-left: auto; display: flex; align-items: center; padding-right: 19px; }
.g14 { margin-left: 14px; }
.g6 { margin-left: 6px; }
.clockbox { width: 72px; margin-left: 6px; display: flex; flex-direction: column; align-items: flex-end; font: 11.500px/16px "Open Sans", sans-serif; white-space: nowrap; }
```
